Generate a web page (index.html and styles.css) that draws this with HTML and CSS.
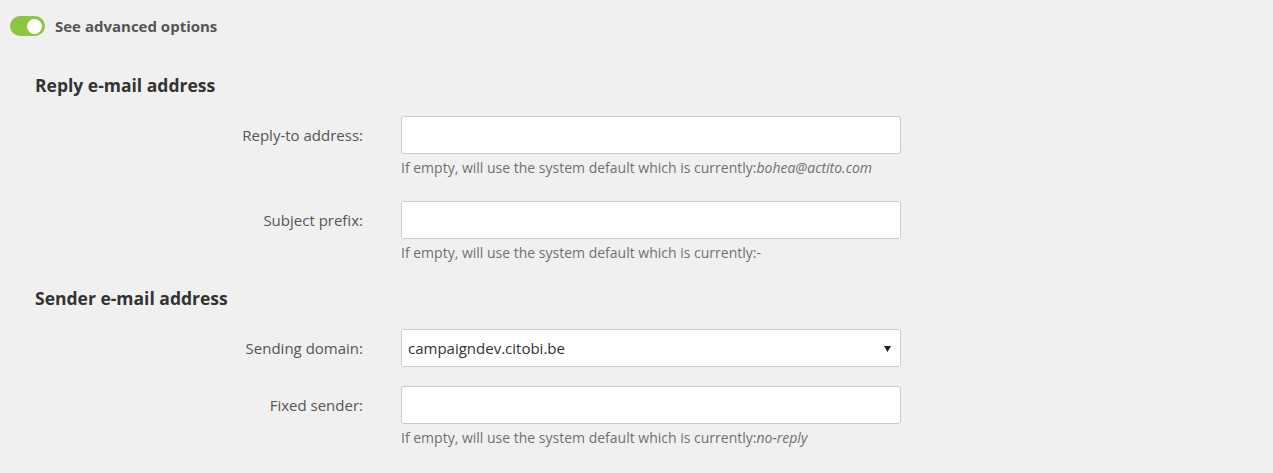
FILE: index.html
```html
<!DOCTYPE html>
<html>
<head>
<meta charset="utf-8">
<link rel="stylesheet" href="styles.css">
</head>
<body>
<div class="page">
  <div class="toggle-row">
    <span class="toggle"><span class="knob"></span></span>
    <span class="toggle-label">See advanced options</span>
  </div>

  <h2 class="section-title first">Reply e-mail address</h2>

  <div class="form-row">
    <label class="label">Reply-to address:</label>
    <div class="field">
      <div class="input"></div>
      <div class="help">If empty, will use the system default which is currently:<em>bohea@actito.com</em></div>
    </div>
  </div>

  <div class="form-row">
    <label class="label">Subject prefix:</label>
    <div class="field">
      <div class="input"></div>
      <div class="help">If empty, will use the system default which is currently:-</div>
    </div>
  </div>

  <h2 class="section-title">Sender e-mail address</h2>

  <div class="form-row">
    <label class="label">Sending domain:</label>
    <div class="field">
      <div class="input select">
        <span class="select-value">campaigndev.citobi.be</span>
        <svg class="caret" width="7" height="7" viewBox="0 0 7 7"><path d="M0 1 H7 L3.5 7 Z" fill="#222"/></svg>
      </div>
    </div>
  </div>

  <div class="form-row">
    <label class="label">Fixed sender:</label>
    <div class="field">
      <div class="input"></div>
      <div class="help">If empty, will use the system default which is currently:<em>no-reply</em></div>
    </div>
  </div>
</div>
</body>
</html>
```

FILE: styles.css
```css
html, body {
  margin: 0;
  padding: 0;
  background: #f0f0f0;
}
body {
  font-family: "Open Sans", "Noto Sans", sans-serif;
  color: #555;
}
.page {
  padding: 16px 0 0 0;
}
.toggle-row {
  display: flex;
  align-items: center;
  gap: 10px;
  padding-left: 10px;
  height: 20px;
}
.toggle {
  width: 35px;
  height: 20px;
  border-radius: 10px;
  background: #8cc63e;
  display: flex;
  align-items: center;
  justify-content: flex-end;
  padding-right: 3px;
  box-sizing: border-box;
}
.knob {
  width: 15px;
  height: 15px;
  border-radius: 50%;
  background: #fff;
}
.toggle-label {
  font-size: 15px;
  font-weight: 700;
  color: #555;
}
.section-title {
  margin: 3px 0 19px 35px;
  font-size: 17.5px;
  line-height: 24px;
  font-weight: 700;
  color: #333;
}
.section-title.first {
  margin-top: 37px;
  margin-bottom: 19px;
}
.form-row {
  display: grid;
  grid-template-columns: 328px 500px;
  column-gap: 38px;
  padding-left: 35px;
  margin-bottom: 19px;
}
.label {
  text-align: right;
  font-size: 15px;
  line-height: 38px;
  height: 38px;
  color: #555;
}
.input {
  height: 38px;
  box-sizing: border-box;
  border: 1px solid #ccc;
  border-radius: 3px;
  background: #fff;
}
.select {
  display: flex;
  align-items: center;
  justify-content: space-between;
  padding: 0 9px 0 6px;
}
.select-value {
  font-size: 15px;
  color: #333;
}
.help {
  margin: 4px 0 4px;
  font-size: 14px;
  line-height: 20px;
  color: #707070;
}
.help em {
  font-style: italic;
}
```
